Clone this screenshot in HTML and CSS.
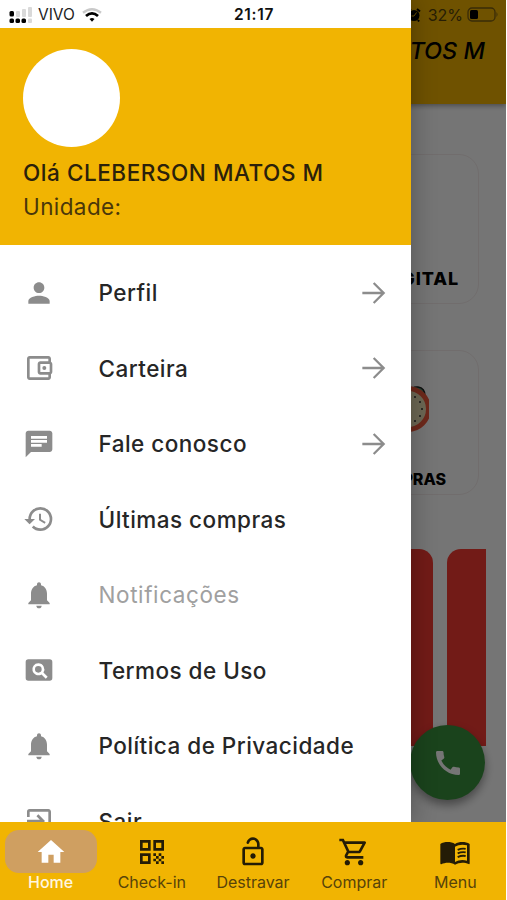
FILE: index.html
```
<!DOCTYPE html>
<html lang="pt-BR">
<head>
    <meta charset="UTF-8">
    <meta name="viewport" content="width=device-width, initial-scale=1.0">
    <title>Menu</title>
    <link rel="stylesheet" href="styles.css">
</head>
<body>
    <div class="app">
        <div class="tela">
            <header class="topo">
                <div class="status-direita">
                    <svg class="alarme" viewBox="0 0 14 14">
                        <circle cx="7" cy="7.5" r="5.5"/>
                        <path d="M1 3.500L4 1M13 3.500L10 1M3 12L2 13.500M11 12L12 13.500" stroke="#000" stroke-width="2"/>
                        <path d="M9.500 4.500L7 8H4.500" fill="none" stroke="#f1b402" stroke-width="1"/>
                    </svg>
                    <span>32%</span>
                    <svg class="bateria" viewBox="0 0 32 16">
                        <rect x="1" y="1" width="27" height="13" rx="4" fill="none" stroke="#7d5e12" stroke-width="1.300"/>
                        <rect x="3" y="3" width="8" height="9" rx="1.500"/>
                        <path d="M29.500 5q2 2.500 0 5z" fill="#7d5e12"/>
                    </svg>
                </div>
                <h1 class="titulo">MATOS M</h1>
            </header>
            <main class="conteudo">
                <div class="cartao cartao-digital"><span>DIGITAL</span></div>
                <div class="cartao cartao-compras">
                    <svg class="relogio" viewBox="0 0 50 50">
                        <path d="M33 11q-1-7 6-6q7 1 7 9z" fill="#4f9c78" stroke="#222" stroke-width="1.500"/>
                        <circle cx="29" cy="27" r="20.500" fill="#eee2b8" stroke="#f05a3c" stroke-width="5"/>
                        <g fill="#333">
                            <circle cx="43" cy="27" r="1"/><circle cx="41" cy="20" r="1"/><circle cx="41" cy="34" r="1"/>
                            <circle cx="36" cy="15" r="1"/><circle cx="36" cy="39" r="1"/>
                        </g>
                    </svg>
                    <span>COMPRAS</span>
                </div>
                <div class="carrossel">
                    <div class="banner"></div>
                    <div class="banner banner-proximo"></div>
                </div>
            </main>
            <button class="ligar" aria-label="Ligar">
                <svg viewBox="0 0 24 24"><path d="M20.010 15.380c-1.230 0-2.420-.2-3.530-.56a.977.977 0 0 0-1.010.24l-1.570 1.970c-2.830-1.350-5.480-3.900-6.890-6.830l1.950-1.660c.27-.28.35-.67.24-1.020-.37-1.110-.56-2.300-.56-3.530 0-.54-.45-.99-.99-.99H4.190C3.650 3 3 3.240 3 3.990 3 13.280 10.730 21 20.010 21c.71 0 .99-.63.99-1.180v-3.450c0-.54-.45-.99-.99-.99z"/></svg>
            </button>
            <div class="sombra"></div>

            <aside class="gaveta">
                <div class="status">
                    <svg class="sinal" viewBox="0 0 24 16">
                        <g fill="#d9d9d9">
                            <rect x="7" y="4" width="4" height="6" rx="1"/>
                            <rect x="13" y="2" width="4" height="8" rx="1"/>
                            <rect x="19" y="0" width="4" height="10" rx="1"/>
                            <rect x="19" y="11.500" width="4" height="4.500" rx="1"/>
                        </g>
                        <rect x="0.500" y="4" width="4.500" height="5.500" rx="1.500"/>
                        <rect x="0.500" y="11.500" width="4.500" height="4.500" rx="1.500"/>
                        <rect x="6.500" y="11.500" width="4.500" height="4.500" rx="1.500"/>
                        <rect x="12.500" y="11.500" width="4.500" height="4.500" rx="1.500"/>
                    </svg>
                    <span class="operadora">VIVO</span>
                    <svg class="wifi" viewBox="0 0 20 14" fill="none" stroke-width="2.400">
                        <path d="M1 4.800Q10-2.200 19 4.800" stroke="#c9c9c9"/>
                        <path d="M4 8Q10 2.800 16 8" stroke="#000" stroke-width="2.800"/>
                        <path d="M7.500 11Q10 8.800 12.500 11L10 13.700z" fill="#000"/>
                    </svg>
                    <span class="hora">21:17</span>
                </div>
                <div class="perfil">
                    <div class="foto"></div>
                    <p class="nome">Olá CLEBERSON MATOS M</p>
                    <p class="unidade">Unidade:</p>
                </div>
                <nav class="lista">
                    <a class="item">
                        <svg viewBox="0 0 24 24"><path d="M12 12c2.210 0 4-1.790 4-4s-1.790-4-4-4-4 1.790-4 4 1.790 4 4 4zm0 2c-2.670 0-8 1.340-8 4v2h16v-2c0-2.660-5.330-4-8-4z"/></svg>
                        <span class="texto">Perfil</span>
                        <svg class="seta" viewBox="0 0 24 24"><path d="M4 12H19.500M12.500 4.500L20 12L12.500 19.500"/></svg>
                    </a>
                    <a class="item">
                        <svg viewBox="0 0 24 24"><path d="M21 7.280V5c0-1.100-.9-2-2-2H5c-1.110 0-2 .9-2 2v14c0 1.100.89 2 2 2h14c1.100 0 2-.9 2-2v-2.280A2 2 0 0 0 22 15V9a2 2 0 0 0-1-1.720zM20 9v6h-7V9h7zM5 19V5h14v2h-6c-1.100 0-2 .9-2 2v6c0 1.100.9 2 2 2h6v2H5z"/><circle cx="16" cy="12" r="1.500"/></svg>
                        <span class="texto">Carteira</span>
                        <svg class="seta" viewBox="0 0 24 24"><path d="M4 12H19.500M12.500 4.500L20 12L12.500 19.500"/></svg>
                    </a>
                    <a class="item">
                        <svg viewBox="0 0 24 24"><path d="M20 2H4c-1.100 0-1.990.9-1.990 2L2 22l4-4h14c1.100 0 2-.9 2-2V4c0-1.100-.9-2-2-2zM6 9h12v2H6V9zm8 5H6v-2h8v2zm4-6H6V6h12v2z"/></svg>
                        <span class="texto">Fale conosco</span>
                        <svg class="seta" viewBox="0 0 24 24"><path d="M4 12H19.500M12.500 4.500L20 12L12.500 19.500"/></svg>
                    </a>
                    <a class="item">
                        <svg viewBox="0 0 24 24"><path d="M13 3a9 9 0 0 0-9 9H1l3.890 3.890.07.14L9 12H6c0-3.870 3.130-7 7-7s7 3.130 7 7-3.130 7-7 7c-1.930 0-3.680-.79-4.940-2.060l-1.420 1.420A8.954 8.954 0 0 0 13 21a9 9 0 0 0 0-18zm-1 5v5l4.280 2.540.72-1.210-3.500-2.080V8H12z"/></svg>
                        <span class="texto">Últimas compras</span>
                    </a>
                    <a class="item">
                        <svg viewBox="0 0 24 24"><path d="M12 22c1.100 0 2-.9 2-2h-4c0 1.100.89 2 2 2zm6-6v-5c0-3.070-1.640-5.640-4.500-6.320V4c0-.83-.67-1.500-1.500-1.500s-1.500.67-1.500 1.500v.68C7.630 5.360 6 7.920 6 11v5l-2 2v1h16v-1l-2-2z"/></svg>
                        <span class="texto inativo">Notificações</span>
                    </a>
                    <a class="item">
                        <svg viewBox="0 0 24 24"><path fill-rule="evenodd" d="M4 4h16a2 2 0 0 1 2 2v12a2 2 0 0 1-2 2H4a2 2 0 0 1-2-2V6a2 2 0 0 1 2-2zM11.500 7a4.500 4.500 0 1 0 2.380 8.310L17.070 18.500l1.430-1.430-3.190-3.180A4.500 4.500 0 0 0 11.500 7zm0 2a2.500 2.500 0 1 1 0 5 2.500 2.500 0 0 1 0-5z"/></svg>
                        <span class="texto">Termos de Uso</span>
                    </a>
                    <a class="item">
                        <svg viewBox="0 0 24 24"><path d="M12 22c1.100 0 2-.9 2-2h-4c0 1.100.89 2 2 2zm6-6v-5c0-3.070-1.640-5.640-4.500-6.320V4c0-.83-.67-1.500-1.500-1.500s-1.500.67-1.500 1.500v.68C7.630 5.360 6 7.920 6 11v5l-2 2v1h16v-1l-2-2z"/></svg>
                        <span class="texto">Política de Privacidade</span>
                    </a>
                    <a class="item">
                        <svg viewBox="0 0 24 24"><path d="M10.090 15.590L11.500 17l5-5-5-5-1.410 1.410L12.670 11H3v2h9.670l-2.580 2.590zM19 3H5a2 2 0 0 0-2 2v4h2V5h14v14H5v-4H3v4a2 2 0 0 0 2 2h14c1.100 0 2-.9 2-2V5c0-1.100-.9-2-2-2z"/></svg>
                        <span class="texto">Sair</span>
                    </a>
                </nav>
            </aside>
        </div>

        <footer class="barra">
            <a class="aba ativa">
                <span class="icone"><svg viewBox="0 0 24 24"><path d="M10 20v-6h4v6h5v-8h3L12 3 2 12h3v8z"/></svg></span>
                <span>Home</span>
            </a>
            <a class="aba">
                <span class="icone"><svg viewBox="0 0 24 24"><path fill-rule="evenodd" d="M3 11h8V3H3v8zm2-6h4v4H5V5zM3 21h8v-8H3v8zm2-6h4v4H5v-4zM13 3v8h8V3h-8zm6 6h-4V5h4v4zM19 19h2v2h-2zM13 13h2v2h-2zM15 15h2v2h-2zM13 17h2v2h-2zM15 19h2v2h-2zM17 17h2v2h-2zM17 13h2v2h-2zM19 15h2v2h-2z"/></svg></span>
                <span>Check-in</span>
            </a>
            <a class="aba">
                <span class="icone"><svg viewBox="0 0 24 24"><path d="M18 8h-1V6c0-2.760-2.240-5-5-5-2.280 0-4.270 1.540-4.840 3.750-.14.54.18 1.080.72 1.220.53.140 1.080-.18 1.220-.72A2.996 2.996 0 0 1 12 3c1.650 0 3 1.350 3 3v2H6c-1.100 0-2 .9-2 2v10c0 1.100.9 2 2 2h12c1.100 0 2-.9 2-2V10c0-1.100-.9-2-2-2zm0 12H6V10h12v10zm-6-3c1.100 0 2-.9 2-2s-.9-2-2-2-2 .9-2 2 .9 2 2 2z"/></svg></span>
                <span>Destravar</span>
            </a>
            <a class="aba">
                <span class="icone"><svg viewBox="0 0 24 24"><path d="M15.550 13c.75 0 1.410-.41 1.750-1.030l3.580-6.490A.996.996 0 0 0 20.010 4H5.210l-.94-2H1v2h2l3.600 7.590-1.350 2.440C4.520 15.370 5.480 17 7 17h12v-2H7l1.100-2h7.450zM6.160 6h12.150l-2.760 5H8.530L6.160 6zM7 18c-1.100 0-1.990.9-1.990 2S5.900 22 7 22s2-.9 2-2-.9-2-2-2zm10 0c-1.100 0-1.990.9-1.990 2s.89 2 1.990 2 2-.9 2-2-.9-2-2-2z"/></svg></span>
                <span>Comprar</span>
            </a>
            <a class="aba">
                <span class="icone"><svg viewBox="0 0 24 24"><path fill-rule="evenodd" d="M17.500 4.500c-1.950 0-4.050.4-5.500 1.500-1.450-1.100-3.550-1.500-5.500-1.500S2.450 4.900 1 6v14.650c0 .65.730.45.75.45C3.100 20.450 5.050 20 6.500 20c1.950 0 4.050.4 5.500 1.500 1.350-.85 3.800-1.500 5.500-1.500 1.650 0 3.350.3 4.750 1.050.41.210.75-.19.75-.45V6c-1.490-1.120-3.630-1.500-5.500-1.500zM21 18.500c-1.100-.35-2.300-.5-3.500-.5-1.700 0-4.150.65-5.500 1.500V8c1.350-.85 3.800-1.500 5.500-1.500 1.200 0 2.400.15 3.500.5v11.500z"/><path d="M14 10.400Q17 9 20 9.600M14 13.100Q17 11.700 20 12.300M14 15.800Q17 14.400 20 15" fill="none" stroke="currentColor" stroke-width="1.400"/></svg></span>
                <span>Menu</span>
            </a>
        </footer>
    </div>
</body>
</html>
```
FILE: styles.css
```
* {
    box-sizing: border-box;
}
body {
    margin: 0;
    background-color: #ffffff;
    font-family: Inter, Roboto, sans-serif;
}
.app {
    width: 506px;
    height: 900px;
    display: flex;
    flex-direction: column;
    overflow: hidden;
}
.tela {
    position: relative;
    height: 822px;
    overflow: hidden;
}

/* Tela atrás da gaveta */
.topo {
    height: 104px;
    background-color: #f1b402;
    box-shadow: 0 2px 5px rgba(0, 0, 0, 0.35);
}
.status-direita {
    height: 29px;
    display: flex;
    justify-content: flex-end;
    align-items: center;
    padding-right: 7px;
    font-size: 16px;
    color: #56430c;
}
.alarme {
    width: 14px;
    height: 14px;
    margin-right: 7px;
}
.bateria {
    width: 32px;
    height: 16px;
    margin-left: 4px;
}
.titulo {
    margin: 7px 21px 0 0;
    font-size: 23.5px;
    line-height: 30px;
    font-weight: 500;
    font-style: italic;
    text-align: right;
}
.conteudo {
    padding: 50px 27px 0 30px;
}
.cartao {
    border: 1px solid #f6eeee;
    border-radius: 20px;
    display: flex;
    flex-direction: column;
    align-items: flex-end;
    justify-content: flex-end;
    font-size: 18px;
    line-height: 22px;
    font-weight: 800;
}
.cartao-digital {
    height: 150px;
    padding: 0 19px 13px;
}
.cartao-digital span {
    font-size: 18px;
    letter-spacing: 0.9px;
}
.cartao-compras {
    height: 145px;
    margin-top: 46px;
    padding: 0 32px 4px;
    font-size: 16px;
}
.relogio {
    width: 50px;
    height: 50px;
    margin: 0 17px 36px 0;
}
.carrossel {
    display: flex;
    gap: 14px;
    margin: 54px -7px 0 -30px;
}
.banner {
    width: 433px;
    height: 197px;
    flex: none;
    border-radius: 14px 14px 0 0;
    background-color: #f83b33;
}
.banner-proximo {
    width: 39px;
    border-radius: 14px 0 0 0;
}
.ligar {
    position: absolute;
    right: 21px;
    bottom: 22px;
    width: 75px;
    height: 75px;
    padding: 0;
    border: none;
    border-radius: 50%;
    background-color: #3a923e;
    box-shadow: 0 5px 10px rgba(0, 0, 0, 0.4);
}
.ligar svg {
    width: 32px;
    height: 32px;
    display: block;
    margin: 0 auto;
    fill: #ffffff;
}
.sombra {
    position: absolute;
    inset: 0;
    background-color: rgba(0, 0, 0, 0.54);
}

/* Gaveta */
.gaveta {
    position: absolute;
    left: 0;
    top: 0;
    width: 411px;
    height: 822px;
    overflow: hidden;
    background-color: #ffffff;
    box-shadow: 0 0 24px rgba(0, 0, 0, 0.3);
}
.status {
    height: 28px;
    display: flex;
    align-items: center;
    padding: 1px 0 0 9px;
    font-size: 15.5px;
    color: #222222;
}
.sinal {
    width: 24px;
    height: 16px;
}
.operadora {
    margin-left: 5px;
    width: 38px;
}
.wifi {
    width: 20px;
    height: 14px;
    margin-left: 6px;
}
.hora {
    margin-left: 132px;
    font-weight: 600;
    letter-spacing: 0.7px;
    color: #111111;
}
.perfil {
    height: 217px;
    padding: 21px 23px 0;
    background-color: #f1b402;
}
.foto {
    width: 97px;
    height: 98px;
    border-radius: 50%;
    background-color: #ffffff;
}
.perfil p {
    margin: 0;
    line-height: 34px;
    font-size: 22.5px;
    white-space: nowrap;
}
.perfil .nome {
    margin-top: 9px;
    font-weight: 500;
    letter-spacing: 0.55px;
    color: #2b210b;
}
.perfil .unidade {
    color: #4a370a;
    letter-spacing: 0.4px;
}
.lista {
    padding-top: 10px;
}
.item {
    height: 75.5px;
    display: flex;
    align-items: center;
    padding: 0 22.5px;
    color: #262626;
}
.item svg {
    width: 32px;
    height: 32px;
    flex: none;
    fill: #8c8c8c;
}
.texto {
    flex: 1;
    margin-left: 44px;
    font-size: 22.5px;
    font-weight: 500;
    letter-spacing: 0.47px;
    white-space: nowrap;
}
.inativo {
    color: #a0a0a0;
    font-weight: 400;
    letter-spacing: 0.6px;
}
.item .seta {
    fill: none;
    stroke: #8c8c8c;
    stroke-width: 1.7;
}

/* Barra inferior */
.barra {
    height: 78px;
    display: flex;
    padding-top: 8px;
    background-color: #f1b402;
}
.aba {
    flex: 1;
    display: flex;
    flex-direction: column;
    align-items: center;
    font-size: 16px;
    line-height: 18px;
    color: #57430a;
}
.icone {
    width: 92px;
    height: 43px;
    display: flex;
    align-items: center;
    justify-content: center;
    border-radius: 14px;
    color: #241c06;
}
.icone svg {
    width: 32px;
    height: 32px;
    fill: currentColor;
}
.ativa {
    color: #fff6e0;
    font-weight: 500;
}
.ativa .icone {
    background-color: #cf9f61;
    color: #ffffff;
}
```
